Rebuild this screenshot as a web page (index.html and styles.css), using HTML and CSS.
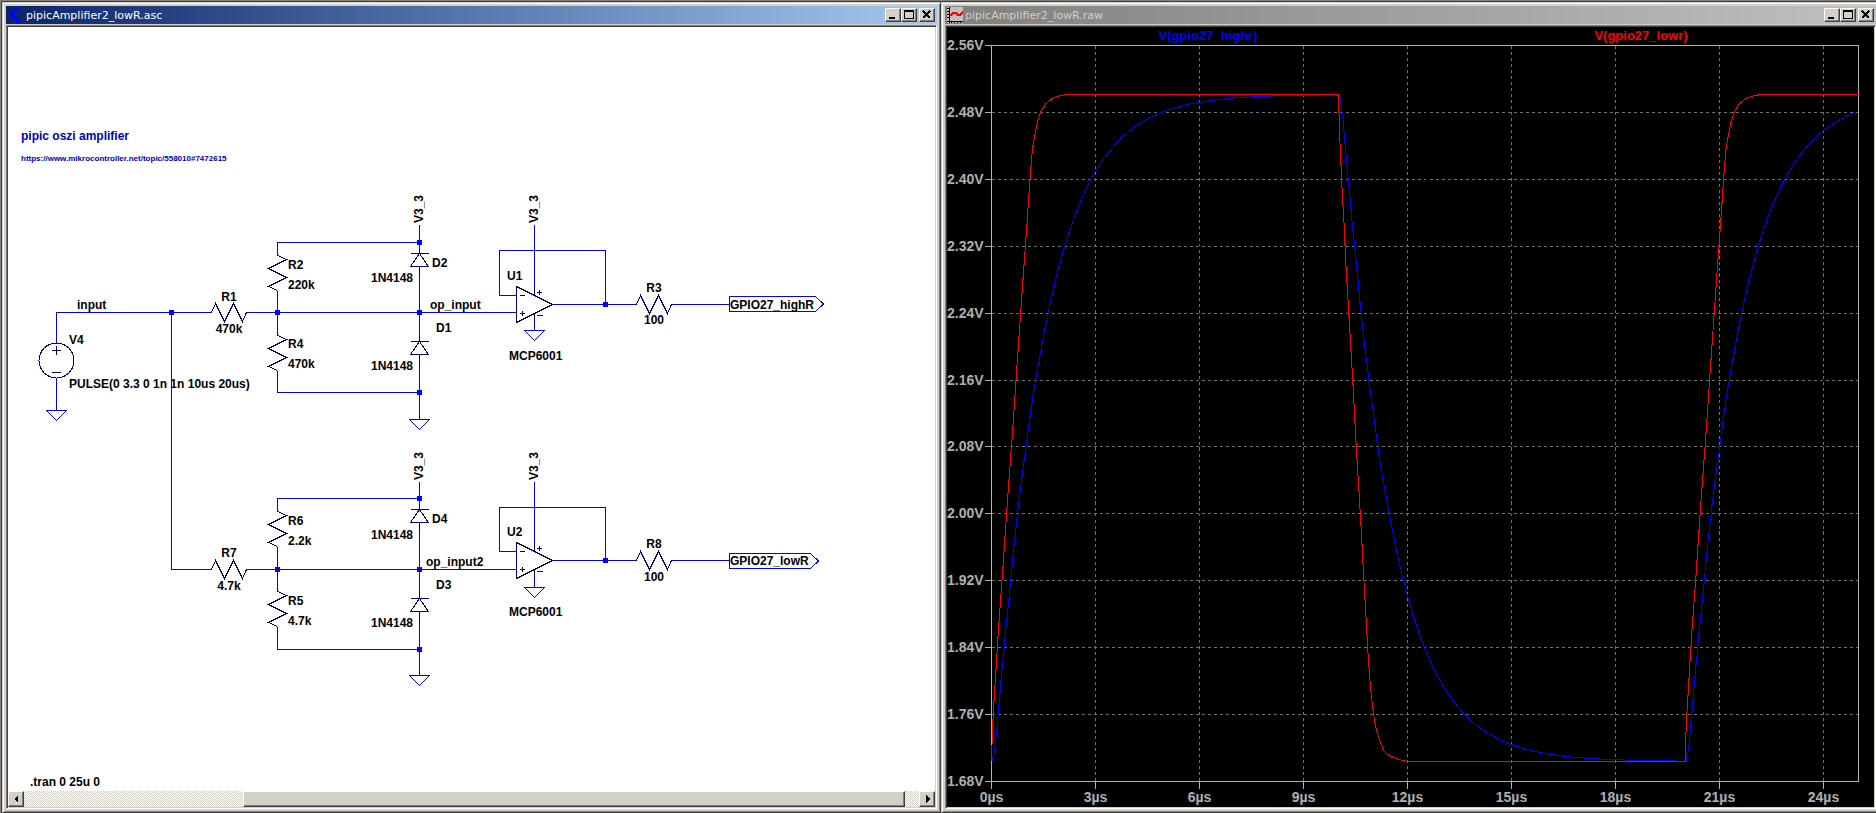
FILE: index.html
```html
<!DOCTYPE html>
<html lang="en">
<head>
    <meta charset="UTF-8">
    <title>pipicAmplifier2_lowR</title>
    <link rel="stylesheet" href="styles.css">
</head>
<body>
<main class="desktop">
    <section class="window">
        <header class="titlebar active">
            <svg class="icon" viewBox="0 0 16 16">
                <path d="M1 7h4M5 3v9M5 6l5-5M5 9l6 6" fill="none" stroke="#00f" stroke-width="2"/>
                <path d="M12 16H7l5-5z" fill="#00f"/>
            </svg>
            <h1>pipicAmplifier2_lowR.asc</h1>
            <div class="controls">
                <button aria-label="Minimize"><svg viewBox="0 0 12 10"><path d="M2 7h6v2H2z"/></svg></button>
                <button aria-label="Maximize"><svg viewBox="0 0 12 10"><path d="M1 0h10v9H1zM2 2v6h8V2z" fill-rule="evenodd"/></svg></button>
                <button class="close" aria-label="Close"><svg viewBox="0 0 12 10"><path d="M2 1l7 7M9 1L2 8" stroke="#000" stroke-width="2"/></svg></button>
            </div>
        </header>
        <div class="client sheet">
            <svg class="schematic">
                <defs>
                    <path id="res-h" d="M0 0l4-9 9 18 9-18 9 18 4-9"/>
                    <path id="res-v" d="M0 0l9 4-18 9 18 9-18 9 9 4"/>
                    <path id="diode" d="M-9 0H9M0 0l-9 13H9zM0-6V0M0 13v10"/>
                    <path id="gnd" d="M-10 0h20l-10 10z"/>
                    <path id="opamp" d="M0-18V18L36 0zM3-9h5M3 9h5M5.500 6.500v5M20-12h5M22.500-14.500v5M20 11h6M18-17v8M18 9v8"/>
                    <path id="node" d="M-2.500-2.500h5v5h-5z"/>
                </defs>

                <!-- wires -->
                <g class="wire">
                    <path d="M48.500 316V285.500H203.500M48.500 351V383.500"/>
                    <path d="M163.500 285.500V542.500H203.500"/>
                    <path d="M238.500 285.500H508.500M238.500 542.500H508.500"/>

                    <path d="M269.500 228.500V215.500H411.500M269.500 263.500V308.500M269.500 343.500V365.500H411.500"/>
                    <path d="M411.500 197.500V226.500M411.500 239.500V314.500M411.500 327.500V392.500"/>
                    <path d="M526.500 197.500V262M526.500 294V303.500"/>
                    <path d="M508.500 268.500H491.500V223.500H597.500V277.500M544.500 277.500H628.500M663.500 277.500H721.500"/>
                    <path d="M721.500 269.500H807.500L815.500 277L807.500 284.500H721.500z"/>

                    <path d="M269.500 484.500V471.500H411.500M269.500 519.500V564.500M269.500 599.500V622.500H411.500"/>
                    <path d="M411.500 454.500V483.500M411.500 495.500V571.500M411.500 584.500V648.500"/>
                    <path d="M526.500 454.500V518M526.500 550V560.500"/>
                    <path d="M508.500 524.500H491.500V480.500H597.500V533.500M544.500 533.500H628.500M663.500 533.500H721.500"/>
                    <path d="M721.500 526.500H802.500L810.500 534L802.500 541.500H721.500z"/>

                    <use href="#gnd" x="48.500" y="383.500"/>
                    <use href="#gnd" x="411.500" y="392.500"/>
                    <use href="#gnd" x="526.500" y="303.500"/>
                    <use href="#gnd" x="411.500" y="648.500"/>
                    <use href="#gnd" x="526.500" y="560.500"/>
                </g>

                <!-- parts -->
                <g class="part">
                    <circle cx="48.500" cy="333.500" r="17.500"/>
                    <path d="M44 323.500h9M48.500 319v9M44 345.500h9"/>
                    <use href="#res-h" x="203.500" y="285.500"/>
                    <use href="#res-h" x="628.500" y="277.500"/>
                    <use href="#res-h" x="203.500" y="542.500"/>
                    <use href="#res-h" x="628.500" y="533.500"/>
                    <use href="#res-v" x="269.500" y="228.500"/>
                    <use href="#res-v" x="269.500" y="308.500"/>
                    <use href="#res-v" x="269.500" y="484.500"/>
                    <use href="#res-v" x="269.500" y="564.500"/>
                    <use href="#diode" x="411.500" y="226.500"/>
                    <use href="#diode" x="411.500" y="314.500"/>
                    <use href="#diode" x="411.500" y="482.500"/>
                    <use href="#diode" x="411.500" y="571.500"/>
                    <use href="#opamp" x="508.500" y="277.500"/>
                    <use href="#opamp" x="508.500" y="533.500"/>
                </g>

                <g class="nodes">
                    <use href="#node" x="163.500" y="285.500"/>
                    <use href="#node" x="269.500" y="285.500"/>
                    <use href="#node" x="411.500" y="285.500"/>
                    <use href="#node" x="411.500" y="215.500"/>
                    <use href="#node" x="411.500" y="365.500"/>
                    <use href="#node" x="597.500" y="277.500"/>
                    <use href="#node" x="269.500" y="542.500"/>
                    <use href="#node" x="411.500" y="542.500"/>
                    <use href="#node" x="411.500" y="471.500"/>
                    <use href="#node" x="411.500" y="622.500"/>
                    <use href="#node" x="597.500" y="533.500"/>
                </g>

                <!-- labels -->
                <g class="label">
                    <text class="note" x="13" y="113">pipic oszi amplifier</text>
                    <a href="https://www.mikrocontroller.net/topic/558010#7472615"><text class="note small" x="13" y="134">https://www.mikrocontroller.net/topic/558010#7472615</text></a>

                    <text x="69" y="282">input</text>
                    <text x="61" y="317">V4</text>
                    <text x="61" y="361">PULSE(0 3.3 0 1n 1n 10us 20us)</text>
                    <text class="mid" x="221" y="274">R1</text>
                    <text class="mid" x="221" y="306">470k</text>
                    <text x="280" y="242">R2</text>
                    <text x="280" y="262">220k</text>
                    <text x="280" y="321">R4</text>
                    <text x="280" y="341">470k</text>
                    <text x="424" y="240">D2</text>
                    <text x="363" y="255">1N4148</text>
                    <text x="422" y="282">op_input</text>
                    <text x="428" y="305">D1</text>
                    <text x="363" y="343">1N4148</text>
                    <text x="499" y="253">U1</text>
                    <text x="501" y="333">MCP6001</text>
                    <text class="mid" x="646" y="265">R3</text>
                    <text class="mid" x="646" y="297">100</text>
                    <text x="722" y="282">GPIO27_highR</text>
                    <text transform="translate(415 196) rotate(-90)">V3_3</text>
                    <text transform="translate(530 196) rotate(-90)">V3_3</text>

                    <text class="mid" x="221" y="530">R7</text>
                    <text class="mid" x="221" y="563">4.7k</text>
                    <text x="280" y="498">R6</text>
                    <text x="280" y="518">2.2k</text>
                    <text x="280" y="578">R5</text>
                    <text x="280" y="598">4.7k</text>
                    <text x="424" y="496">D4</text>
                    <text x="363" y="512">1N4148</text>
                    <text x="418" y="539">op_input2</text>
                    <text x="428" y="562">D3</text>
                    <text x="363" y="600">1N4148</text>
                    <text x="499" y="509">U2</text>
                    <text x="501" y="589">MCP6001</text>
                    <text class="mid" x="646" y="521">R8</text>
                    <text class="mid" x="646" y="554">100</text>
                    <text x="722" y="538">GPIO27_lowR</text>
                    <text transform="translate(415 453) rotate(-90)">V3_3</text>
                    <text transform="translate(530 453) rotate(-90)">V3_3</text>

                    <text x="22" y="759">.tran 0 25u 0</text>
                </g>
            </svg>
            <div class="scrollbar">
                <button aria-label="Scroll left"><svg viewBox="0 0 12 12"><path d="M8 2v8L4 6z"/></svg></button>
                <input type="range" min="0" max="100" value="94" aria-label="Horizontal scroll">
                <button aria-label="Scroll right"><svg viewBox="0 0 12 12"><path d="M5 2v8l4-4z"/></svg></button>
            </div>
        </div>
    </section>

    <section class="window">
        <header class="titlebar">
            <svg class="icon" viewBox="0 0 16 16">
                <path d="M0 0h16v16H0z" fill="#c0c0c0"/>
                <path d="M2 0v16M0 14h16M0 1h2M0 4h2M0 7h2M0 10h2M4 14v2M7 14v2M10 14v2M13 14v2" stroke="#000" fill="none"/>
                <path d="M3 9l3-3h3l2 2h2l3-3" stroke="#f00" stroke-width="2" fill="none"/>
            </svg>
            <h1>pipicAmplifier2_lowR.raw</h1>
            <div class="controls">
                <button aria-label="Minimize"><svg viewBox="0 0 12 10"><path d="M2 7h6v2H2z"/></svg></button>
                <button aria-label="Maximize"><svg viewBox="0 0 12 10"><path d="M1 0h10v9H1zM2 2v6h8V2z" fill-rule="evenodd"/></svg></button>
                <button class="close" aria-label="Close"><svg viewBox="0 0 12 10"><path d="M2 1l7 7M9 1L2 8" stroke="#000" stroke-width="2"/></svg></button>
            </div>
        </header>
        <div class="client">
            <svg class="plot" id="plot"></svg>
        </div>
    </section>
</main>
<script src="plot.js"></script>
</body>
</html>
```
FILE: styles.css
```css
*{box-sizing:border-box;}
html,body,h1{margin:0;padding:0;}
html,body{height:100%;overflow:hidden;}
body{background:#808080;font:11px/18px "DejaVu Sans", sans-serif;}

.desktop{
    display:grid;
    grid-template-columns:1fr 1fr;
    height:calc(100% - 1px);
    margin:1px -4px 0 1px;
    border-top:1px solid #404040;
    border-left:1px solid #404040;
}

/* windows */
.window{
    display:flex;
    flex-direction:column;
    min-width:0;
    padding:3px;
    background:#d4d0c8;
    border:1px solid #404040;
    border-top-color:#d4d0c8;
    border-left-color:#d4d0c8;
    box-shadow:inset 1px 1px #fff, inset -1px -1px #808080;
}
.titlebar{
    display:flex;
    align-items:center;
    height:18px;
    padding:0 2px;
    background:linear-gradient(to right, #808080, #c0c0c0);
    color:#d4d0c8;
}
.titlebar.active{
    background:linear-gradient(to right, #0a246a, #a6caf0);
    color:#fff;
}
.titlebar h1{
    flex:1;
    padding:2px 0 0 2px;
    font-size:11px;
    font-weight:normal;
}
.icon{
    width:16px;
    height:16px;
    shape-rendering:crispEdges;
}
.controls{
    display:flex;
}
.controls button,
.scrollbar button{
    width:16px;
    height:14px;
    padding:0;
    background:#d4d0c8;
    border:1px solid #404040;
    border-top-color:#fff;
    border-left-color:#fff;
    box-shadow:inset -1px -1px #808080;
}
.controls .close{
    margin-left:2px;
}
.controls svg,
.scrollbar svg{
    display:block;
    width:12px;
    height:10px;
    margin:0 1px;
    shape-rendering:crispEdges;
}
.client{
    flex:1;
    display:flex;
    flex-direction:column;
    min-height:0;
    margin-top:1px;
    padding:1px;
    background:#000;
    border:1px solid #808080;
    border-right-color:#fff;
    border-bottom-color:#fff;
    box-shadow:inset 1px 1px #404040, inset -1px -1px #d4d0c8;
}
.sheet{
    background:#fff;
}

/* schematic */
.schematic{
    flex:1;
    width:100%;
    min-height:0;
    shape-rendering:crispEdges;
}
.wire{fill:none;stroke:#0000ff;}
.part{fill:none;stroke:#000080;}
.nodes{fill:#0000ff;}
.label{
    font:bold 12px "Liberation Sans", Arial, sans-serif;
    fill:#000;
}
.label .note{fill:#0000c0;}
.label .small{font-size:8px;}
.label .mid{text-anchor:middle;}

/* scrollbar */
.scrollbar{
    display:flex;
    height:16px;
    background:repeating-conic-gradient(#d4d0c8 0 25%, #fff 0 50%) 0 0/2px 2px;
}
.scrollbar button{
    height:16px;
}
.scrollbar svg{
    height:12px;
}
.scrollbar input{
    flex:1;
    min-width:0;
    height:16px;
    margin:0;
    background:none;
    -webkit-appearance:none;
    appearance:none;
}
.scrollbar input::-webkit-slider-thumb{
    -webkit-appearance:none;
    width:74%;
    height:16px;
    background:#d4d0c8;
    border:1px solid #404040;
    border-top-color:#fff;
    border-left-color:#fff;
    box-shadow:inset -1px -1px #808080;
}

/* plot */
.plot{
    flex:1;
    width:100%;
    min-height:0;
    font:bold 14px "Liberation Sans", Arial, sans-serif;
    shape-rendering:crispEdges;
}
.plot .grid{fill:none;stroke:#707070;stroke-dasharray:3 3;}
.plot .axis{fill:none;stroke:#b0b0b0;}
.plot .tick{fill:#b0b0b0;}
.plot .trace{fill:none;}
.plot .name{font-size:13px;text-anchor:middle;}
.plot .mid{text-anchor:middle;}
.plot .high{stroke:#0000ff;}
.plot .low{stroke:#ff0000;}
.plot .name.high{stroke:none;fill:#0000ff;}
.plot .name.low{stroke:none;fill:#ff0000;}
```
FILE: plot.js
```js
var LO = 1.704, HI = 2.5015;

// rising edges, [time in us, volts]
var highRise = [
    [0,1.704],[.03,1.704],[.09,1.718],[.14,1.737],[.23,1.779],[.29,1.809],[.35,1.833],[.4,1.858],[.46,1.881],
    [.52,1.906],[.58,1.931],[.63,1.954],[.69,1.977],[.78,2.012],[.84,2.03],[.92,2.058],[1.01,2.083],
    [1.1,2.113],[1.21,2.145],[1.33,2.174]
];
// after that it is a plain RC charge
for (var t = 1.44; t < 9.9; t += 0.1) {
    highRise.push([t, HI - 0.1815 * Math.exp((2.11 - t) / 1.31)]);
}
var lowRise = [
    [0,1.704],[.03,1.743],[.06,1.768],[.2,1.861],[.32,1.93],[.46,2.017],[.61,2.101],[.75,2.186],[.89,2.271],
    [1.04,2.358],[1.125,2.409],[1.18,2.436],[1.24,2.451],[1.33,2.469],[1.41,2.48],[1.56,2.49],
    [1.76,2.497],[1.98,2.5],[2.18,2.5015]
];
var lowFall = [
    [0,2.5015],[.02,2.479],[.05,2.443],[.08,2.413],[.11,2.387],[.17,2.344],[.22,2.299],[.31,2.234],
    [.37,2.193],[.43,2.15],[.51,2.086],[.57,2.044],[.66,1.982],[.74,1.918],[.8,1.877],[.86,1.832],
    [.92,1.797],[.98,1.772],[1.03,1.757],[1.09,1.743],[1.21,1.727],[1.32,1.716],[1.47,1.711],
    [1.64,1.708],[1.78,1.706],[2,1.704]
];
var highFall = highRise.map(function (p) {
    return [p[0], LO + HI - p[1]];
});

function shift(points, t) {
    return points.map(function (p) {
        return [p[0] + t, p[1]];
    });
}

var high = highRise.concat(shift(highFall, 10), shift(highRise, 20));
var low = lowRise.concat(shift(lowFall, 10), shift(lowRise, 20), [[25, HI]]);

var plot = document.getElementById("plot");

function draw() {
    var w = Math.round(plot.clientWidth), h = Math.round(plot.clientHeight);
    var left = 44.5, top = 18.5, right = w - 15.5, bottom = h - 25.5;
    var i, x, y, out = "", grid = "", axis = "", ticks = "";

    function px(t) { return left + t / 25 * (right - left); }
    function py(v) { return top + (2.56 - v) / 0.88 * (bottom - top); }
    function trace(points, name) {
        var line = points.filter(function (p) { return p[0] <= 25; }).map(function (p) {
            return px(p[0]).toFixed(1) + "," + py(p[1]).toFixed(1);
        }).join(" ");
        return '<polyline class="trace ' + name + '" points="' + line + '"/>';
    }

    for (i = 0; i <= 11; i++) {
        y = Math.floor(py(2.56 - i * 0.08)) + 0.5;
        if (i > 0 && i < 11) grid += "M" + left + " " + y + "H" + right;
        axis += "M" + (left - 7) + " " + y + "H" + left;
        ticks += '<text class="tick" x="0" y="' + (y + 4.5) + '">' + (2.56 - i * 0.08).toFixed(2) + 'V</text>';
    }
    for (i = 0; i <= 24; i += 3) {
        x = Math.floor(px(i)) + 0.5;
        if (i > 0) grid += "M" + x + " " + top + "V" + bottom;
        axis += "M" + x + " " + bottom + "v7";
        ticks += '<text class="tick mid" x="' + x + '" y="' + (bottom + 20.5) + '">' + i + 'µs</text>';
    }
    axis += "M" + left + " " + top + "H" + right + "V" + bottom + "H" + left + "z";

    out += '<path class="grid" d="' + grid + '"/><path class="axis" d="' + axis + '"/>' + ticks;
    out += trace(high, "high") + trace(low, "low");
    out += '<text class="name high" x="' + Math.floor(px(6.25)) + '" y="13">V(gpio27_highr)</text>';
    out += '<text class="name low" x="' + Math.floor(px(18.75)) + '" y="13">V(gpio27_lowr)</text>';
    plot.innerHTML = out;
}

draw();
window.onresize = draw;
```
